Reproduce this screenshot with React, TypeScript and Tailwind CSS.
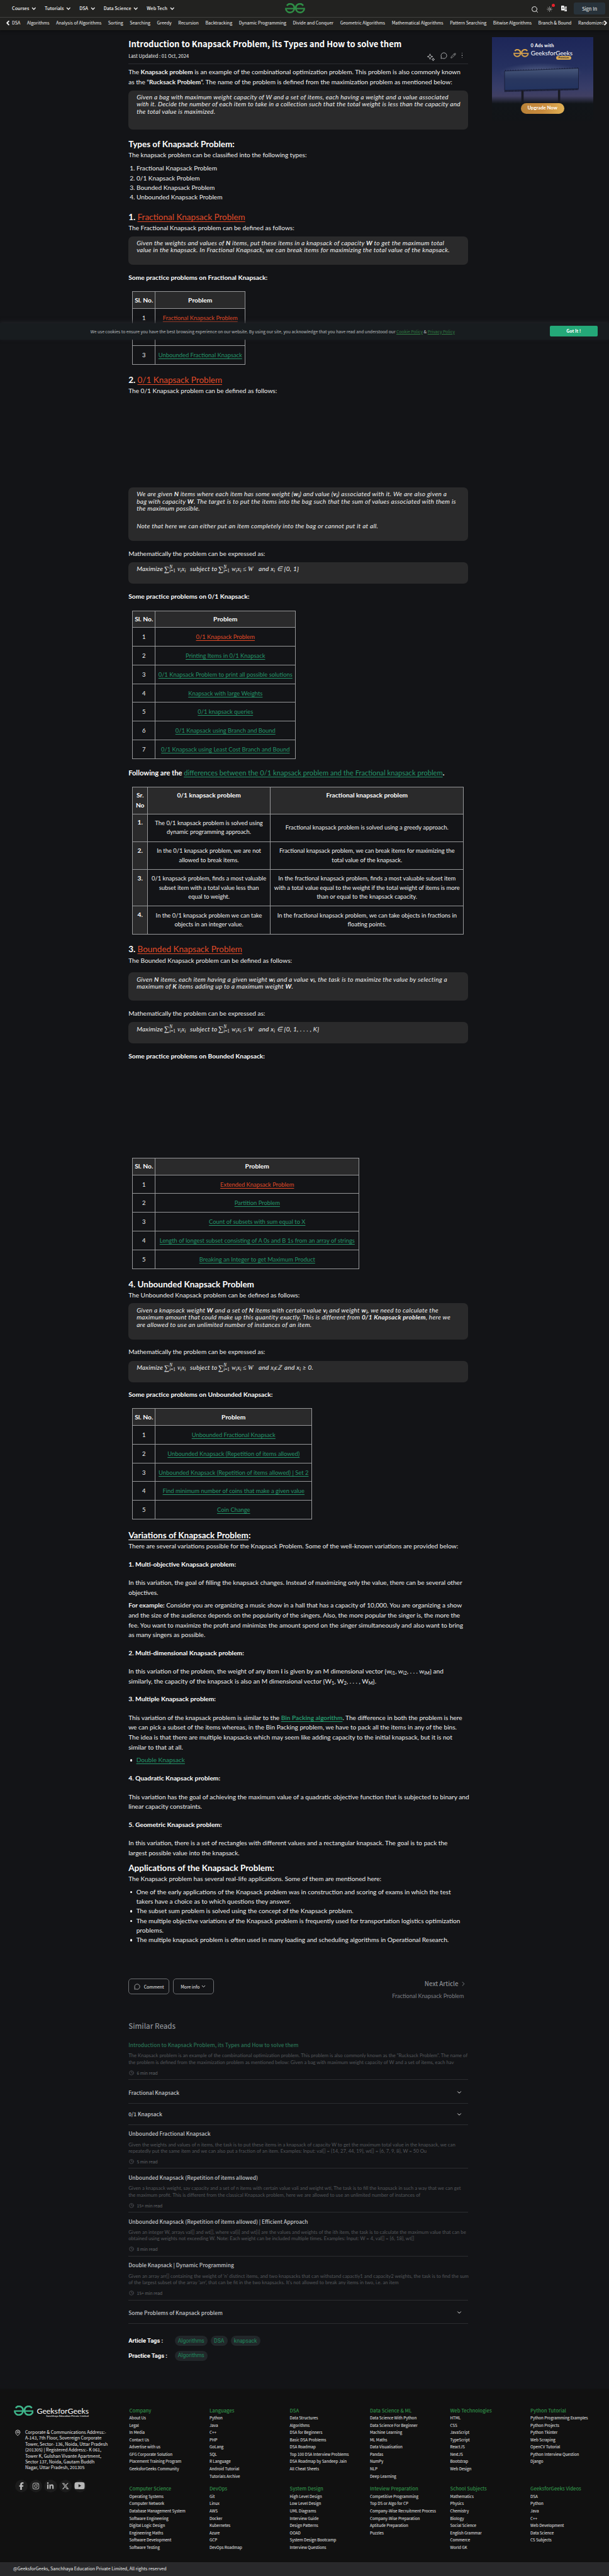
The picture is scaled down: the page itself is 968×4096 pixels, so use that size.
import type { ReactNode } from 'react';
import { ChevronDown, ChevronLeft, ChevronRight, Clock, MapPin, MessageCircle, Pencil, Search, Sun } from 'lucide-react';
import { FaFacebookF, FaInstagram, FaLinkedinIn, FaXTwitter, FaYoutube } from 'react-icons/fa6';

function Logo({ className, gold }: { className: string; gold?: boolean }) {
  const color = gold ? '#d3a04c' : 'currentColor';
  return (
    <svg className={className} viewBox="0 0 64 34" fill="none" stroke={color} strokeWidth="5.4" preserveAspectRatio="none">
      <path d="M58 8A13 13.5 0 0 0 34.5 17A13.5 14 0 0 0 61.2 19.5" />
      <path d="M6 8A13 13.5 0 0 1 29.5 17A13.5 14 0 0 1 2.8 19.5" />
      <path d="M0.3 17.8H63.7" strokeWidth="4.6" />
    </svg>
  );
}

const topNav = ['Courses', 'Tutorials', 'DSA', 'Data Science', 'Web Tech'];
const subNav = [
  'DSA', 'Algorithms', 'Analysis of Algorithms', 'Sorting', 'Searching', 'Greedy', 'Recursion', 'Backtracking',
  'Dynamic Programming', 'Divide and Conquer', 'Geometric Algorithms', 'Mathematical Algorithms',
  'Pattern Searching', 'Bitwise Algorithms', 'Branch & Bound', 'Randomized',
];

function Header() {
  return (
    <header className="h-[48px] bg-[#222220] font-['Noto_Sans_CJK_JP',sans-serif] text-[#f1f1f1] shadow-[0_1px_4px_#0a0b0d]">
      <div className="flex h-[27.5px] border-b border-[#41413f]">
        <nav className="flex w-[453px] items-center gap-[12.4px] pl-[19px] text-[7.2px] font-medium">
          {topNav.map((t) => (
            <span key={t} className="flex items-center gap-[2.8px] whitespace-nowrap">
              {t}
              <ChevronDown className="mt-[1px] h-[9.5px] w-[9.5px]" strokeWidth={3.6} />
            </span>
          ))}
        </nav>
        <Logo className="mt-[5px] h-[16.5px] w-[32px] text-[#2f8d46]" />
        <div className="ml-auto flex items-start pr-[6px]">
          <Search className="mt-[9px] h-[12px] w-[12px]" strokeWidth={2} />
          <div className="relative mt-[9.5px] ml-[13px] h-[9px] w-[9px]">
            <Sun className="h-[9px] w-[9px]" strokeWidth={1.8} />
            <span className="absolute -top-[3.4px] left-[8.2px] h-[5px] w-[5px] rounded-full bg-[#e8212b]" />
          </div>
          <svg className="mt-[9px] ml-[13.5px] h-[9px] w-[9.5px]" viewBox="0 0 19 18">
            <path d="M1 0H9L12 15H1Q0 15 0 14V1Q0 0 1 0Z" fill="#fff" />
            <path d="M11 3H18Q19 3 19 4V17Q19 18 18 18H9L12.5 15Z" fill="#e4e4e4" />
            <path d="M3.4 10.5L5.5 4.5L7.6 10.5M4.2 8.6H6.8M12.5 7.5H18M15.2 5.8V7.5M17 7.5Q16 11.5 13 13.5M13.5 9.5Q15 12.5 18 13.5" stroke="#222220" strokeWidth="1.1" fill="none" />
          </svg>
          <div className="mt-[3.8px] ml-[11px] flex h-[19.7px] w-[50px] items-center justify-center rounded-[2.5px] bg-[#28323a] text-[7.6px]">
            Sign In
          </div>
        </div>
      </div>
      <div className="relative h-[20.5px] overflow-hidden">
        <div className="flex gap-[10.6px] pl-[19px] text-[7.03px] leading-[17px] whitespace-nowrap">
          {subNav.map((t) => (
            <span key={t}>{t}</span>
          ))}
        </div>
        <ChevronLeft className="absolute top-[3px] left-[6.5px] h-[11px] w-[11px]" strokeWidth={4} />
        <div className="absolute top-0 right-0 flex h-[18px] w-[14px] items-center justify-end bg-gradient-to-r from-transparent to-[#222220]">
          <ChevronRight className="h-[11px] w-[11px]" strokeWidth={4} />
        </div>
      </div>
    </header>
  );
}

function PremiumAd() {
  return (
    <aside className="relative mt-[10.9px] ml-[37.2px] flex h-[134px] w-[161px] shrink-0 flex-col items-center overflow-hidden font-['Lato',sans-serif] text-white">
      <svg className="absolute inset-0 h-full w-full" viewBox="0 0 161 134" preserveAspectRatio="none">
        <defs>
          <linearGradient id="sky" x1="0" y1="0" x2="0" y2="1">
            <stop offset="0" stopColor="#1d2658" />
            <stop offset="0.35" stopColor="#25305f" />
            <stop offset="0.6" stopColor="#383d68" />
            <stop offset="0.7" stopColor="#403f62" />
            <stop offset="0.79" stopColor="#111519" />
            <stop offset="1" stopColor="#121417" />
          </linearGradient>
          <linearGradient id="board" x1="0" y1="0" x2="0" y2="1">
            <stop offset="0" stopColor="#48587b" />
            <stop offset="0.5" stopColor="#29375f" />
            <stop offset="1" stopColor="#23335f" />
          </linearGradient>
          <radialGradient id="glow">
            <stop offset="0" stopColor="#7d8ba8" stopOpacity="0.55" />
            <stop offset="1" stopColor="#7d8ba8" stopOpacity="0" />
          </radialGradient>
        </defs>
        <rect width="161" height="134" fill="url(#sky)" />
        <ellipse cx="78" cy="56" rx="66" ry="15" fill="url(#glow)" />
        <path d="M20 54L137.5 49.5V82L20 84.5Z" fill="url(#board)" stroke="#151a33" strokeWidth="0.8" />
        <path d="M20 86L137.5 83" stroke="#14182b" strokeWidth="2.4" strokeDasharray="1.2 0.5" />
        <path d="M21 53L137 49" stroke="#151a33" strokeWidth="1.8" strokeDasharray="0.7 3.4" />
        <path d="M48.5 85V105M106.7 84V105" stroke="#191a22" strokeWidth="3.6" />
      </svg>
      <div className="relative mt-[9px] text-[7.4px] leading-[9px] font-bold tracking-[0.25px]">0 Ads with</div>
      <div className="relative mt-[1.5px] flex w-full items-center gap-[3px] pl-[34.7px]">
        <Logo gold className="h-[13px] w-[24.5px]" />
        <span className="text-[9.9px] leading-[13px]">GeeksforGeeks</span>
      </div>
      <div className="relative -mt-[2px] ml-[102px] flex h-[5.4px] w-[24.4px] items-center justify-center self-start rounded-full bg-[#d9a955] text-[4.2px] leading-none font-bold text-[#222]">
        Premium
      </div>
      <div className="relative mt-[69px] flex h-[16.8px] w-[69px] items-center justify-center rounded-full bg-gradient-to-r from-[#b98238] via-[#c88b3e] to-[#e0b155] text-[7.7px] font-bold">
        Upgrade Now
      </div>
    </aside>
  );
}

const P = ({ mt = '', children }: { mt?: string; children: ReactNode }) => (
  <p className={'text-[10.11px] leading-[15.7px] whitespace-nowrap ' + mt}>{children}</p>
);
const H2 = ({ mt, children }: { mt: string; children: ReactNode }) => (
  <h2 className={'text-[13.5px] leading-[20px] font-bold whitespace-nowrap text-white ' + mt}>{children}</h2>
);
const H4 = ({ mt, children }: { mt: string; children: ReactNode }) => (
  <h4 className={'text-[10.27px] leading-[15.7px] font-bold whitespace-nowrap text-white ' + mt}>{children}</h4>
);
const Quote = ({ className, children }: { className: string; children: ReactNode }) => (
  <blockquote
    className={'w-[540.3px] rounded-[7px] bg-[#2a2a2b] pt-[5.4px] pl-[13px] text-[10.1px] leading-[11.5px] tracking-[0.24px] whitespace-nowrap italic ' + className}
  >
    {children}
  </blockquote>
);
const Sub = ({ children }: { children: ReactNode }) => <sub className="bottom-[-0.25em] text-[7.4px] leading-[0]">{children}</sub>;
const Red = ({ children }: { children: ReactNode }) => (
  <a className="font-normal text-[#e04a28] underline decoration-1 underline-offset-[1.5px]">{children}</a>
);
const Green = ({ children }: { children: ReactNode }) => (
  <a className="text-[#24966a] underline decoration-1 underline-offset-[1.5px]">{children}</a>
);

const mathFont = "font-['Liberation_Serif',serif] tracking-normal";
function Sum() {
  return (
    <span className={'inline-flex w-[21px] items-center align-middle not-italic ' + mathFont}>
      <span className="text-[11.5px] leading-[9px]">∑</span>
      <span className="flex flex-col text-[7.2px] leading-[6.6px]">
        <span className="italic">N</span>
        <span>
          <i>i</i>=1
        </span>
      </span>
    </span>
  );
}
const MathVar = ({ v }: { v: string }) => (
  <span className={mathFont}>
    {v}
    <Sub>i</Sub>
  </span>
);
function Formula({ children }: { children: ReactNode }) {
  return (
    <p className="flex h-[12px] items-center">
      <span>Maximize</span>
      <span className="ml-[2px] flex w-[36.5px] items-center">
        <Sum />
        <MathVar v="v" />
        <MathVar v="x" />
      </span>
      <span className="ml-[4.5px] w-[43.5px]">subject to</span>
      <span className="ml-[1.5px] flex w-[58.5px] items-center">
        <Sum />
        <MathVar v="w" />
        <MathVar v="x" />
        <span className={'pl-[2.5px] ' + mathFont}>≤ W</span>
      </span>
      <span className="ml-[5.5px]">{children}</span>
    </p>
  );
}

type Row = { n: string; t: string; red?: boolean };
function ProblemTable({ className, rows }: { className: string; rows: Row[] }) {
  return (
    <div className={'ml-[6.2px] border-t border-l border-[#97989a] text-center ' + className}>
      <div className="flex h-[26.7px] bg-[#2a2a2b] text-[10.27px] font-bold text-white">
        <div className="w-[35.8px] shrink-0 border-r border-b border-[#97989a] pt-[5.5px] leading-[15px] whitespace-nowrap">Sl. No.</div>
        <div className="grow border-r border-b border-[#97989a] pt-[5.5px] leading-[15px]">Problem</div>
      </div>
      {rows.map((r) => (
        <div key={r.n} className="flex h-[29.8px] text-[9.4px]">
          <div className="w-[35.8px] shrink-0 border-r border-b border-[#97989a] pt-[7px] leading-[15px]">{r.n}</div>
          <div className="grow border-r border-b border-[#97989a] pt-[7px] leading-[15px] whitespace-nowrap">
            {r.red ? <Red>{r.t}</Red> : <Green>{r.t}</Green>}
          </div>
        </div>
      ))}
    </div>
  );
}

const compare: [string, string, ReactNode, ReactNode][] = [
  ['h-[44.5px]', '1.', <>The 0/1 knapsack problem is solved using<br />dynamic programming approach.</>, <>Fractional knapsack problem is solved using a greedy approach.</>],
  ['h-[44px]', '2.', <>In the 0/1 knapsack problem, we are not<br />allowed to break items.</>, <>Fractional knapsack problem, we can break items for maximizing the<br />total value of the knapsack.</>],
  ['h-[58.3px]', '3.', <>0/1 knapsack problem, finds a most valuable<br />subset item with a total value less than<br />equal to weight.</>, <>In the fractional knapsack problem, finds a most valuable subset item<br />with a total value equal to the weight if the total weight of items is more<br />than or equal to the knapsack capacity.</>],
  ['h-[44.3px]', '4.', <>In the 0/1 knapsack problem we can take<br />objects in an integer value.</>, <>In the fractional knapsack problem, we can take objects in fractions in<br />floating points.</>],
];

function CompareTable() {
  const cell = 'border-r border-b border-[#97989a] ';
  return (
    <div className="mt-[14.3px] ml-[6.2px] w-[527px] border-t border-l border-[#97989a] text-center whitespace-nowrap">
      <div className="flex h-[42.5px] bg-[#2a2a2b] text-[10.2px] leading-[15.6px] font-bold text-white">
        <div className={cell + 'w-[23.6px] pt-[5px]'}>Sr.<br />No</div>
        <div className={cell + 'w-[195.2px] pt-[5px]'}>0/1 knapsack problem</div>
        <div className={cell + 'grow pt-[5px]'}>Fractional knapsack problem</div>
      </div>
      {compare.map(([h, n, a, b]) => (
        <div key={n} className={'flex text-[9.4px] leading-[14.6px] ' + h}>
          <div className={cell + 'w-[23.6px] bg-[#2a2a2b] pt-[5.5px] text-[10.2px] font-bold text-white'}>{n}</div>
          <div className={cell + 'flex w-[195.2px] items-center justify-center'}>
            <div>{a}</div>
          </div>
          <div className={cell + 'flex grow items-center justify-center'}>
            <div>{b}</div>
          </div>
        </div>
      ))}
    </div>
  );
}

const Bullet = ({ children }: { children: ReactNode }) => (
  <li className="flex text-[10.11px] leading-[15.3px] whitespace-nowrap">
    <span className="mt-[6.2px] mr-[6.7px] ml-[2.4px] h-[3.4px] w-[3.4px] rounded-full bg-white" />
    <span>{children}</span>
  </li>
);

const cjk = "font-['Noto_Sans_CJK_JP',sans-serif] ";

function Article() {
  return (
    <article className="ml-[204.2px] w-[540.3px] shrink-0">
      <h1 className={cjk + 'mt-[12px] text-[13.06px] leading-[20px] font-semibold whitespace-nowrap text-white'}>
        Introduction to Knapsack Problem, its Types and How to solve them
      </h1>
      <div className={cjk + 'flex h-[22px] items-start border-b border-[#2b2d31] text-[7.62px]'}>
        <span className="mt-[3.3px] leading-[12px]">Last Updated : 01 Oct, 2024</span>
        <div className="ml-auto flex pr-[9px] text-[#c4c5c7]">
          <svg className="mt-[5px] h-[12px] w-[12px]" viewBox="0 0 24 24" fill="none" stroke="currentColor" strokeWidth="1.8" strokeLinejoin="round">
            <path d="M9 1.5L11.3 7.7L17.5 10L11.3 12.3L9 18.5L6.7 12.3L0.8 10L6.7 7.7Z" />
            <path d="M19 14.5L20.3 17.7L23.5 19L20.3 20.3L19 23.5L17.7 20.3L14.5 19L17.7 17.7Z" />
          </svg>
          <MessageCircle className="mt-[3.2px] ml-[9px] h-[11px] w-[11px]" strokeWidth={1.8} />
          <Pencil className="mt-[4px] ml-[5.5px] h-[9px] w-[9px]" strokeWidth={1.8} />
          <span className="mt-[3.5px] ml-[8.5px] flex flex-col gap-[2.2px]">
            <i className="h-[1.5px] w-[1.5px] rounded-full bg-current" />
            <i className="h-[1.5px] w-[1.5px] rounded-full bg-current" />
            <i className="h-[1.5px] w-[1.5px] rounded-full bg-current" />
          </span>
        </div>
      </div>

      <P mt="mt-[5.2px]">
        The <b>Knapsack problem</b> is an example of the combinational optimization problem. This problem is also commonly known
        <br />
        as the “<b>Rucksack Problem</b>“. The name of the problem is defined from the maximization problem as mentioned below:
      </P>
      <Quote className="mt-[5px] h-[62.4px]">
        Given a bag with maximum weight capacity of W and a set of items, each having a weight and a value associated
        <br />
        with it. Decide the number of each item to take in a collection such that the total weight is less than the capacity and
        <br />
        the total value is maximized.
      </Quote>

      <H2 mt="mt-[13.4px]">Types of Knapsack Problem:</H2>
      <P>The knapsack problem can be classified into the following types:</P>
      <ol className="mt-[5.4px] pl-[2px] text-[10.11px] leading-[15.2px]">
        <li>1. Fractional Knapsack Problem</li>
        <li>2. 0/1 Knapsack Problem</li>
        <li>3. Bounded Knapsack Problem</li>
        <li>4. Unbounded Knapsack Problem</li>
      </ol>

      <H2 mt="mt-[13.6px]">1. <Red>Fractional Knapsack Problem</Red></H2>
      <P>The Fractional Knapsack problem can be defined as follows:</P>
      <Quote className="mt-[5px] h-[45.4px]">
        Given the weights and values of <b>N</b> items, put these items in a knapsack of capacity <b>W</b> to get the maximum total
        <br />
        value in the knapsack. In Fractional Knapsack, we can break items for maximizing the total value of the knapsack.
      </Quote>
      <H4 mt="mt-[13px]">Some practice problems on Fractional Knapsack:</H4>
      <ProblemTable
        className="mt-[13.5px] w-[180px]"
        rows={[
          { n: '1', t: 'Fractional Knapsack Problem', red: true },
          { n: '2', t: '' },
          { n: '3', t: 'Unbounded Fractional Knapsack' },
        ]}
      />

      <H2 mt="mt-[14px]">2. <Red>0/1 Knapsack Problem</Red></H2>
      <P>The 0/1 Knapsack problem can be defined as follows:</P>
      <Quote className="mt-[144.8px] h-[85.2px]">
        We are given <b>N</b> items where each item has some weight (<b>w<Sub>i</Sub></b>) and value (<b>v<Sub>i</Sub></b>) associated with it. We are also given a
        <br />
        bag with capacity <b>W</b>. The target is to put the items into the bag such that the sum of values associated with them is
        <br />
        the maximum possible.
        <span className="mt-[16.8px] block">Note that here we can either put an item completely into the bag or cannot put it at all.</span>
      </Quote>
      <P mt="mt-[13.2px]">Mathematically the problem can be expressed as:</P>
      <Quote className="mt-[5px] h-[34.4px]">
        <Formula>and x<Sub>i</Sub> ∈ {'{0, 1}'}</Formula>
      </Quote>
      <H4 mt="mt-[12.9px]">Some practice problems on 0/1 Knapsack:</H4>
      <ProblemTable
        className="mt-[13.7px] w-[260px]"
        rows={[
          { n: '1', t: '0/1 Knapsack Problem', red: true },
          { n: '2', t: 'Printing Items in 0/1 Knapsack' },
          { n: '3', t: '0/1 Knapsack Problem to print all possible solutions' },
          { n: '4', t: 'Knapsack with large Weights' },
          { n: '5', t: '0/1 knapsack queries' },
          { n: '6', t: '0/1 Knapsack using Branch and Bound' },
          { n: '7', t: '0/1 Knapsack using Least Cost Branch and Bound' },
        ]}
      />

      <p className="mt-[14.1px] text-[11.14px] leading-[16px] font-bold whitespace-nowrap text-white">
        Following are the <span className="font-normal"><Green>differences between the 0/1 knapsack problem and the Fractional knapsack problem</Green></span>.
      </p>
      <CompareTable />

      <H2 mt="mt-[13.3px]">3. <Red>Bounded Knapsack Problem</Red></H2>
      <P mt="mt-[0.7px]">The Bounded Knapsack problem can be defined as follows:</P>
      <Quote className="mt-[10.7px] h-[44.8px]">
        Given <b>N</b> items, each item having a given weight <b>w<Sub>i</Sub></b> and a value <b>v<Sub>i</Sub></b>, the task is to maximize the value by selecting a
        <br />
        maximum of <b>K</b> items adding up to a maximum weight <b>W</b>.
      </Quote>
      <P mt="mt-[13.3px]">Mathematically the problem can be expressed as:</P>
      <Quote className="mt-[5.2px] h-[34.2px]">
        <Formula>and x<Sub>i</Sub> ∈ {'{0, 1, . . . , K}'}</Formula>
      </Quote>
      <H4 mt="mt-[13px]">Some practice problems on Bounded Knapsack:</H4>
      <ProblemTable
        className="mt-[152.9px] w-[361px]"
        rows={[
          { n: '1', t: 'Extended Knapsack Problem', red: true },
          { n: '2', t: 'Partition Problem' },
          { n: '3', t: 'Count of subsets with sum equal to X' },
          { n: '4', t: 'Length of longest subset consisting of A 0s and B 1s from an array of strings' },
          { n: '5', t: 'Breaking an Integer to get Maximum Product' },
        ]}
      />

      <H2 mt="mt-[14px]">4. Unbounded Knapsack Problem</H2>
      <P>The Unbounded Knapsack problem can be defined as follows:</P>
      <Quote className="mt-[5.2px] h-[57.2px]">
        Given a knapsack weight <b>W</b> and a set of <b>N</b> items with certain value <b>v<Sub>i</Sub></b> and weight <b>w<Sub>i</Sub></b>, we need to calculate the
        <br />
        maximum amount that could make up this quantity exactly. This is different from <b>0/1 Knapsack problem</b>, here we
        <br />
        are allowed to use an unlimited number of instances of an item.
      </Quote>
      <P mt="mt-[12.7px]">Mathematically the problem can be expressed as:</P>
      <Quote className="mt-[5.6px] h-[34.1px]">
        <Formula>and <span className={mathFont}>x<Sub>i</Sub>ϵℤ</span>&nbsp; and x<Sub>i</Sub> ≥ 0.</Formula>
      </Quote>
      <H4 mt="mt-[12.7px]">Some practice problems on Unbounded Knapsack:</H4>
      <ProblemTable
        className="mt-[13.3px] w-[286px]"
        rows={[
          { n: '1', t: 'Unbounded Fractional Knapsack' },
          { n: '2', t: 'Unbounded Knapsack (Repetition of items allowed)' },
          { n: '3', t: 'Unbounded Knapsack (Repetition of items allowed) | Set 2' },
          { n: '4', t: 'Find minimum number of coins that make a given value' },
          { n: '5', t: 'Coin Change' },
        ]}
      />

      <H2 mt="mt-[14.7px]">
        <span className="underline decoration-1 underline-offset-[1.5px]">Variations of Knapsack Problem</span>:
      </H2>
      <P>There are several variations possible for the Knapsack Problem. Some of the well-known variations are provided below:</P>
      <H4 mt="mt-[13.3px]">1. Multi-objective Knapsack problem:</H4>
      <P mt="mt-[13.8px]">
        In this variation, the goal of filling the knapsack changes. Instead of maximizing only the value, there can be several other
        <br />
        objectives.
      </P>
      <P mt="mt-[4.6px]">
        <b>For example:</b> Consider you are organizing a music show in a hall that has a capacity of 10,000. You are organizing a show
        <br />
        and the size of the audience depends on the popularity of the singers. Also, the more popular the singer is, the more the
        <br />
        fee. You want to maximize the profit and minimize the amount spend on the singer simultaneously and also want to bring
        <br />
        as many singers as possible.
      </P>
      <H4 mt="mt-[13.1px]">2. Multi-dimensional Knapsack problem:</H4>
      <P mt="mt-[13.3px]">
        In this variation of the problem, the weight of any item <b>i</b> is given by an M dimensional vector {'{'}w<Sub>i1</Sub>, w<Sub>i2</Sub>, . . . w<Sub>iM</Sub>{'}'} and
        <br />
        similarly, the capacity of the knapsack is also an M dimensional vector {'{'}W<Sub>1</Sub>, W<Sub>2</Sub>, . . . , W<Sub>M</Sub>{'}'}.
      </P>
      <H4 mt="mt-[12.9px]">3. Multiple Knapsack problem:</H4>
      <P mt="mt-[13.6px]">
        This variation of the knapsack problem is similar to the <b><Green>Bin Packing algorithm</Green></b>. The difference in both the problem is here
        <br />
        we can pick a subset of the items whereas, in the Bin Packing problem, we have to pack all the items in any of the bins.
        <br />
        The idea is that there are multiple knapsacks which may seem like adding capacity to the initial knapsack, but it is not
        <br />
        similar to that at all.
      </P>
      <ul className="mt-[4.6px]">
        <Bullet><Green>Double Knapsack</Green></Bullet>
      </ul>
      <H4 mt="mt-[13.7px]">4. Quadratic Knapsack problem:</H4>
      <P mt="mt-[13.7px]">
        This variation has the goal of achieving the maximum value of a quadratic objective function that is subjected to binary and
        <br />
        linear capacity constraints.
      </P>
      <H4 mt="mt-[12.8px]">5. Geometric Knapsack problem:</H4>
      <P mt="mt-[13.7px]">
        In this variation, there is a set of rectangles with different values and a rectangular knapsack. The goal is to pack the
        <br />
        largest possible value into the knapsack.
      </P>
      <H2 mt="mt-[5.2px]">Applications of the Knapsack Problem:</H2>
      <P>The Knapsack problem has several real-life applications. Some of them are mentioned here:</P>
      <ul className="mt-[5.2px]">
        <Bullet>
          One of the early applications of the Knapsack problem was in construction and scoring of exams in which the test
          <br />
          takers have a choice as to which questions they answer.
        </Bullet>
        <Bullet>The subset sum problem is solved using the concept of the Knapsack problem.</Bullet>
        <Bullet>
          The multiple objective variations of the Knapsack problem is frequently used for transportation logistics optimization
          <br />
          problems.
        </Bullet>
        <Bullet>The multiple knapsack problem is often used in many loading and scheduling algorithms in Operational Research.</Bullet>
      </ul>

      <div className={cjk + 'mt-[54px] flex h-[66.9px] text-[6.9px]'}>
        <div className="flex h-[25px] w-[65px] items-center justify-center gap-[6px] rounded-[5px] border border-[#6d6f72]">
          <MessageCircle className="h-[10px] w-[10px] text-[#c8c8c8]" strokeWidth={1.8} />
          Comment
        </div>
        <div className="ml-[5.8px] flex h-[25px] w-[65px] items-center justify-center gap-[1.5px] rounded-[5px] border border-[#6d6f72]">
          More info
          <ChevronDown className="h-[9px] w-[9px]" strokeWidth={2.4} />
        </div>
        <div className="ml-auto text-right text-[#8a8d92]">
          <div className="flex items-center justify-end gap-[3px] pr-[2px] text-[9.76px] leading-[16px] font-medium">
            Next Article
            <ChevronRight className="h-[13px] w-[11px]" strokeWidth={2} />
          </div>
          <div className="mt-[4px] pr-[7px] font-['Lato',sans-serif] text-[9px] leading-[16px] text-[#7b7e84]">Fractional Knapsack Problem</div>
        </div>
      </div>
    </article>
  );
}

type Read = { title: string; a?: string; b?: string; time?: string; h?: string; green?: boolean };
const reads: Read[] = [
  { title: 'Introduction to Knapsack Problem, its Types and How to solve them', a: 'The Knapsack problem is an example of the combinational optimization problem. This problem is also commonly known as the "Rucksack Problem". The name of', b: 'the problem is defined from the maximization problem as mentioned below: Given a bag with maximum weight capacity of W and a set of items, each hav', time: '6 min read', green: true },
  { title: 'Fractional Knapsack', h: 'h-[37.6px] pt-[3px]' },
  { title: '0/1 Knapsack', h: 'h-[33.9px]' },
  { title: 'Unbounded Fractional Knapsack', a: 'Given the weights and values of n items, the task is to put these items in a knapsack of capacity W to get the maximum total value in the knapsack, we can', b: 'repeatedly put the same item and we can also put a fraction of an item. Examples: Input: val[] = {14, 27, 44, 19}, wt[] = {6, 7, 9, 8}, W = 50 Ou', time: '5 min read' },
  { title: 'Unbounded Knapsack (Repetition of items allowed)', a: 'Given a knapsack weight, say capacity and a set of n items with certain value vali and weight wti, The task is to fill the knapsack in such a way that we can get', b: 'the maximum profit. This is different from the classical Knapsack problem, here we are allowed to use an unlimited number of instances of', time: '15+ min read' },
  { title: 'Unbounded Knapsack (Repetition of items allowed) | Efficient Approach', a: 'Given an integer W, arrays val[] and wt[], where val[i] and wt[i] are the values and weights of the ith item, the task is to calculate the maximum value that can be', b: 'obtained using weights not exceeding W. Note: Each weight can be included multiple times. Examples: Input: W = 4, val[] = {6, 18}, wt[]', time: '8 min read' },
  { title: 'Double Knapsack | Dynamic Programming', a: "Given an array arr[] containing the weight of 'n' distinct items, and two knapsacks that can withstand capactiy1 and capacity2 weights, the task is to find the sum", b: "of the largest subset of the array 'arr', that can be fit in the two knapsacks. It's not allowed to break any items in two, i.e. an item", time: '15+ min read' },
  { title: 'Some Problems of Knapsack problem', h: 'h-[37.2px] pt-[2.6px]' },
];

const Pill = ({ children }: { children: ReactNode }) => (
  <span className="mr-[5.3px] flex h-[15.8px] items-center rounded-full bg-[#22272a] px-[5px] text-[8.65px] text-[#1f8a5e]">{children}</span>
);

function SimilarReads() {
  return (
    <section className="ml-[204.2px] w-[540.3px] shrink-0">
      <h3 className={cjk + 'text-[11.51px] leading-[16px] font-medium text-[#8b8e94]'}>Similar Reads</h3>
      <div className="mt-[8px]">
        {reads.map((r) =>
          r.a ? (
            <div key={r.title} className="h-[69.75px] border-b border-[#2b2d30] pt-[6.5px]">
              <h5 className={cjk + 'text-[8.4px] leading-[14px] font-medium ' + (r.green ? 'text-[#2a7355]' : 'text-[#c2c4c8]')}>{r.title}</h5>
              <p className="mt-[5.6px] text-[7.72px] leading-[10.2px] whitespace-nowrap text-[#54575b]">
                {r.a}
                <br />
                {r.b}
              </p>
              <div className={cjk + 'mt-[5.8px] flex items-center gap-[4px] pl-[1.2px] text-[6.8px] leading-[12px] text-[#64676b]'}>
                <Clock className="h-[8px] w-[8px]" strokeWidth={1.8} />
                {r.time}
              </div>
            </div>
          ) : (
            <div key={r.title} className={'flex items-center justify-between border-b border-[#2b2d30] pr-[9px] ' + r.h}>
              <h5 className={cjk + 'text-[8.4px] leading-[14px] font-medium text-[#c2c4c8]'}>{r.title}</h5>
              <ChevronDown className="mt-[1px] h-[10px] w-[10px] text-[#e0e0e0]" strokeWidth={2.4} />
            </div>
          ),
        )}
      </div>
      <div className="mt-[19.5px] flex flex-col gap-[7.7px] font-['Roboto',sans-serif]">
        <div className="flex h-[15.8px] items-center">
          <b className="w-[73.5px] text-[9.3px] text-white">Article Tags :</b>
          <Pill>Algorithms</Pill>
          <Pill>DSA</Pill>
          <Pill>knapsack</Pill>
        </div>
        <div className="flex h-[15.8px] items-center">
          <b className="w-[73.5px] text-[9.3px] text-white">Practice Tags :</b>
          <Pill>Algorithms</Pill>
        </div>
      </div>
    </section>
  );
}

const columns: { head: string; items: string[] }[] = [
  { head: 'Company', items: ['About Us', 'Legal', 'In Media', 'Contact Us', 'Advertise with us', 'GFG Corporate Solution', 'Placement Training Program', 'GeeksforGeeks Community'] },
  { head: 'Languages', items: ['Python', 'Java', 'C++', 'PHP', 'GoLang', 'SQL', 'R Language', 'Android Tutorial', 'Tutorials Archive'] },
  { head: 'DSA', items: ['Data Structures', 'Algorithms', 'DSA for Beginners', 'Basic DSA Problems', 'DSA Roadmap', 'Top 100 DSA Interview Problems', 'DSA Roadmap by Sandeep Jain', 'All Cheat Sheets'] },
  { head: 'Data Science & ML', items: ['Data Science With Python', 'Data Science For Beginner', 'Machine Learning', 'ML Maths', 'Data Visualisation', 'Pandas', 'NumPy', 'NLP', 'Deep Learning'] },
  { head: 'Web Technologies', items: ['HTML', 'CSS', 'JavaScript', 'TypeScript', 'ReactJS', 'NextJS', 'Bootstrap', 'Web Design'] },
  { head: 'Python Tutorial', items: ['Python Programming Examples', 'Python Projects', 'Python Tkinter', 'Web Scraping', 'OpenCV Tutorial', 'Python Interview Question', 'Django'] },
  { head: 'Computer Science', items: ['Operating Systems', 'Computer Network', 'Database Management System', 'Software Engineering', 'Digital Logic Design', 'Engineering Maths', 'Software Development', 'Software Testing'] },
  { head: 'DevOps', items: ['Git', 'Linux', 'AWS', 'Docker', 'Kubernetes', 'Azure', 'GCP', 'DevOps Roadmap'] },
  { head: 'System Design', items: ['High Level Design', 'Low Level Design', 'UML Diagrams', 'Interview Guide', 'Design Patterns', 'OOAD', 'System Design Bootcamp', 'Interview Questions'] },
  { head: 'Inteview Preparation', items: ['Competitive Programming', 'Top DS or Algo for CP', 'Company-Wise Recruitment Process', 'Company-Wise Preparation', 'Aptitude Preparation', 'Puzzles'] },
  { head: 'School Subjects', items: ['Mathematics', 'Physics', 'Chemistry', 'Biology', 'Social Science', 'English Grammar', 'Commerce', 'World GK'] },
  { head: 'GeeksforGeeks Videos', items: ['DSA', 'Python', 'Java', 'C++', 'Web Development', 'Data Science', 'CS Subjects'] },
];
const socials = [FaFacebookF, FaInstagram, FaLinkedinIn, FaXTwitter, FaYoutube];

function Footer() {
  return (
    <footer className={cjk + 'mt-auto bg-[#111111] text-[#ececec]'}>
      <div className="flex h-[276.3px]">
        <div className="w-[205.5px] shrink-0 pt-[27px]">
          <div className="flex items-start pl-[21.7px]">
            <Logo className="h-[16.6px] w-[31.6px] text-[#3fb68b]" />
            <div className="ml-[4.7px] w-[83px] text-right font-['Lato',sans-serif] text-white">
              <div className="mt-[2.2px] text-[12.3px] leading-[13px]">GeeksforGeeks</div>
              <div className="-mt-[0.8px] text-[4.2px] leading-[5px] whitespace-nowrap">Sanchhaya Education Private Limited</div>
            </div>
          </div>
          <div className="mt-[19px] flex pl-[23px] text-[7.02px] leading-[9.4px]">
            <MapPin className="mt-[0.5px] mr-[6.4px] h-[10.5px] w-[10.5px]" strokeWidth={2} />
            <p className="whitespace-nowrap">
              Corporate &amp; Communications Address:-<br />
              A-143, 7th Floor, Sovereign Corporate<br />
              Tower, Sector- 136, Noida, Uttar Pradesh<br />
              (201305) | Registered Address:- K 061,<br />
              Tower K, Gulshan Vivante Apartment,<br />
              Sector 137, Noida, Gautam Buddh<br />
              Nagar, Uttar Pradesh, 201305
            </p>
          </div>
          <div className="mt-[14px] flex gap-[3px] pl-[24px]">
            {socials.map((Icon, i) => (
              <span key={i} className="flex h-[20.2px] w-[20.2px] items-center justify-center rounded-full bg-[#1c1c1c] text-[#b8b8b8]">
                <Icon className={i === 4 ? 'h-[17px] w-[17px]' : 'h-[12px] w-[12px]'} />
              </span>
            ))}
          </div>
        </div>
        <div className="grid h-[250px] grid-cols-[repeat(6,127.5px)] grid-rows-[124.9px_124.9px] pt-[29px]">
          {columns.map((c) => (
            <div key={c.head}>
              <h6 className="text-[7.68px] leading-[11px] font-medium text-[#2f8d46]">{c.head}</h6>
              <ul className="mt-[1.4px] text-[6.24px] leading-[11.6px] whitespace-nowrap">
                {c.items.map((t) => (
                  <li key={t}>{t}</li>
                ))}
              </ul>
            </div>
          ))}
        </div>
      </div>
      <div className="h-[22.2px] bg-[#29292b] pl-[21px] text-[7.06px] leading-[20px]">
        @GeeksforGeeks, Sanchhaya Education Private Limited, All rights reserved
      </div>
    </footer>
  );
}

function CookieBar() {
  return (
    <div className={cjk + 'absolute top-[513.6px] left-0 flex h-[26.3px] w-full items-center bg-[#181c1f] text-[6.73px] text-[#b9bcbf] shadow-[0_-2px_6px_#212327]'}>
      <p className="ml-[143.8px] whitespace-nowrap">
        We use cookies to ensure you have the best browsing experience on our website. By using our site, you acknowledge that you have read and understood our{' '}
        <a className="text-[#2f7a41] underline">Cookie Policy</a> &amp; <a className="text-[#2f7a41] underline">Privacy Policy</a>
      </p>
      <div className="mr-[18.5px] ml-auto flex h-[17.2px] w-[75.3px] items-center justify-center rounded-[2px] bg-[#24a878] text-[7px] font-bold text-white">
        Got It !
      </div>
    </div>
  );
}

export default function App() {
  return (
    <div className="relative flex h-[4096px] w-[968px] flex-col overflow-hidden bg-[#131417] font-['Lato',sans-serif] text-[#f0f0f0]">
      <Header />
      <main>
        <div className="flex items-start">
          <Article />
          <PremiumAd />
        </div>
        <SimilarReads />
      </main>
      <CookieBar />
      <Footer />
    </div>
  );
}
